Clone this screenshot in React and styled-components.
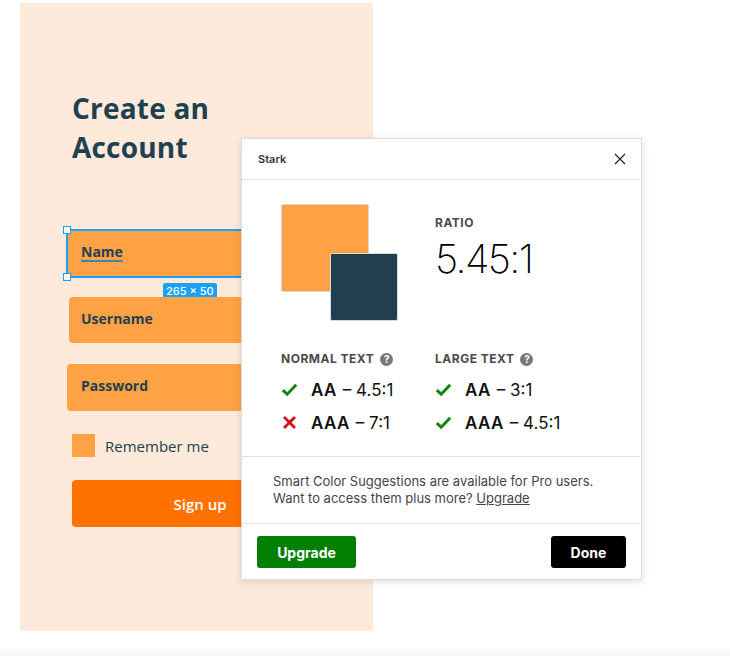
import React from 'react';
import styled, { createGlobalStyle } from 'styled-components';

const GlobalStyle = createGlobalStyle`
  html, body {
    margin: 0;
    padding: 0;
    background: #fff;
  }
  body {
    width: 730px;
    height: 656px;
    overflow: hidden;
    font-family: 'Open Sans', 'Liberation Sans', sans-serif;
  }
`;

const Canvas = styled.div`
  position: relative;
  width: 730px;
  height: 656px;
  padding: 3px 0 0 20px;
  box-sizing: border-box;
  background: linear-gradient(to bottom, #fff 0, #fff 646px, #f6f6f6 656px);
`;

const Artboard = styled.div`
  width: 353px;
  height: 628px;
  background: #feeadb;
  padding: 86px 0 0 52px;
  box-sizing: border-box;
  display: flex;
  flex-direction: column;
  align-items: flex-start;
`;

const Title = styled.h1`
  margin: 0;
  font-family: 'Open Sans', sans-serif;
  font-weight: 700;
  font-size: 28px;
  line-height: 39px;
  color: #1f404e;
  letter-spacing: 0.2px;
`;

const Field = styled.div`
  position: relative;
  box-sizing: border-box;
  width: ${p => p.$width}px;
  height: ${p => p.$height}px;
  margin-left: ${p => p.$x}px;
  margin-top: ${p => p.$gap}px;
  background: #ffa245;
  border-radius: ${p => (p.$selected ? 0 : 4)}px;
  border: ${p => (p.$selected ? '2px solid #1aa0f5' : 'none')};
  display: flex;
  align-items: center;
  padding-left: ${p => p.$pad}px;
  padding-bottom: 4px;
  font-weight: 700;
  font-size: 14px;
  color: #1f404e;
`;

const FieldText = styled.span`
  text-decoration: ${p => (p.$underline ? 'underline' : 'none')};
  text-decoration-color: #3d86b0;
  text-decoration-thickness: 2px;
  text-underline-offset: 3px;
`;

const Handle = styled.span`
  position: absolute;
  width: 6px;
  height: 6px;
  background: #fff;
  border: 1px solid #1aa0f5;
  left: -5px;
  ${p => (p.$bottom ? 'bottom: -5px;' : 'top: -5px;')}
`;

const SizeBadge = styled.span`
  position: absolute;
  left: 95px;
  top: 52px;
  height: 16px;
  padding: 0 3px;
  border-radius: 2px;
  background: #1aa0f5;
  color: #fff;
  font-family: 'Inter', 'Liberation Sans', sans-serif;
  font-size: 11px;
  font-weight: 500;
  line-height: 16px;
  white-space: nowrap;
`;

const CheckRow = styled.div`
  display: flex;
  align-items: center;
  gap: 10px;
  margin-top: 23px;
  font-size: 15px;
  color: #1f404e;
`;

const CheckBox = styled.span`
  width: 23px;
  height: 23px;
  background: #ffa245;
`;

const SignUp = styled.button`
  margin-top: 23px;
  width: 256px;
  height: 47px;
  border: none;
  border-radius: 4px;
  background: #ff7200;
  color: #fff;
  font-family: 'Open Sans', sans-serif;
  font-weight: 600;
  font-size: 15px;
  padding: 0;
`;

/* Stark plugin window floating over the artboard */
const Dialog = styled.div`
  position: absolute;
  left: 241px;
  top: 138px;
  width: 401px;
  height: 442px;
  box-sizing: border-box;
  background: #fff;
  border: 1px solid #dcdcdc;
  box-shadow: 0 2px 8px rgba(0, 0, 0, 0.12);
  display: flex;
  flex-direction: column;
  font-family: 'Inter', 'Liberation Sans', sans-serif;
  color: #111;
`;

const Header = styled.div`
  height: 40px;
  flex-shrink: 0;
  display: flex;
  align-items: center;
  justify-content: space-between;
  padding: 0 15px 0 16px;
  border-bottom: 1px solid #e2e2e2;
  font-size: 11px;
  font-weight: 600;
  color: #333;
`;

const Section = styled.div`
  border-bottom: 1px solid #e2e2e2;
  padding: ${p => p.$pad};
  flex-shrink: 0;
`;

const TopRow = styled.div`
  display: flex;
  align-items: flex-start;
`;

const Swatches = styled.div`
  position: relative;
  width: 116px;
  height: 116px;
  flex-shrink: 0;
`;

const Swatch = styled.span`
  position: absolute;
  box-sizing: border-box;
  left: ${p => p.$at}px;
  top: ${p => p.$at}px;
  width: ${p => p.$size}px;
  height: ${p => p.$size}px;
  border-radius: 2px;
  border: 1px solid #d8d8d8;
  background: ${p => p.$color};
`;

const RatioBlock = styled.div`
  margin-left: 38px;
  padding-top: 11px;
`;

const Caption = styled.div`
  display: flex;
  align-items: center;
  gap: 6px;
  font-size: 12px;
  font-weight: 700;
  letter-spacing: 0.5px;
  color: #4a4a4a;
  text-transform: uppercase;
  line-height: 16px;
`;

const Ratio = styled.div`
  margin-top: 4px;
  font-size: 40px;
  font-weight: 200;
  letter-spacing: -1.6px;
  line-height: 48px;
  color: #000;
`;

const Levels = styled.div`
  display: grid;
  grid-template-columns: 154px 1fr;
  margin-top: 31px;
`;

const LevelCol = styled.div`
  display: flex;
  flex-direction: column;
`;

const Help = styled.span`
  width: 13px;
  height: 13px;
  border-radius: 50%;
  background: #777;
  color: #fff;
  font-size: 10px;
  font-weight: 700;
  letter-spacing: 0;
  line-height: 13px;
  text-align: center;
`;

const Level = styled.div`
  display: flex;
  align-items: center;
  height: 33px;
  font-size: 17px;
  color: #111;
  margin-top: ${p => (p.$first ? 6 : 0)}px;
`;

const Mark = styled.svg`
  width: 17px;
  height: 17px;
  margin-right: 13px;
  flex-shrink: 0;
`;

const Bold = styled.b`
  font-weight: 600;
  letter-spacing: 0.4px;
  margin-right: 6px;
`;

const Note = styled.p`
  margin: 0;
  font-size: 13px;
  line-height: 17px;
  color: #444;
`;

const NoteLink = styled.a`
  color: #444;
  text-decoration: underline;
`;

const Footer = styled.div`
  display: flex;
  justify-content: space-between;
  align-items: center;
  padding: 12px 15px 0 15px;
`;

const ActionButton = styled.button`
  height: 32px;
  width: ${p => p.$width}px;
  border: none;
  border-radius: 3px;
  background: ${p => p.$bg};
  color: #fff;
  font-family: 'Inter', 'Liberation Sans', sans-serif;
  font-size: 14px;
  font-weight: 700;
  padding: 0;
`;

const Check = () => (
  <Mark viewBox="0 0 17 17">
    <path d="M1.8 9.2 L6.2 13.2 L15.2 3.8" fill="none" stroke="#138513" strokeWidth="3" />
  </Mark>
);

const Cross = () => (
  <Mark viewBox="0 0 17 17">
    <path d="M3 3 L14 14 M14 3 L3 14" fill="none" stroke="#d8091b" strokeWidth="2.8" />
  </Mark>
);

const levels = [
  { title: 'Normal Text', rows: [['AA', '4.5:1', true], ['AAA', '7:1', false]] },
  { title: 'Large Text', rows: [['AA', '3:1', true], ['AAA', '4.5:1', true]] },
];

export default function App() {
  return (
    <>
      <GlobalStyle />
      <Canvas>
        <Artboard>
          <Title>
            Create an
            <br />
            Account
          </Title>
          <Field $width={265} $height={49} $x={-6} $gap={62} $pad={13} $selected>
            <FieldText $underline>Name</FieldText>
            <Handle />
            <Handle $bottom />
            <SizeBadge>265 × 50</SizeBadge>
          </Field>
          <Field $width={262} $height={46} $x={-3} $gap={19} $pad={12}>
            <FieldText>Username</FieldText>
          </Field>
          <Field $width={264} $height={47} $x={-5} $gap={21} $pad={14}>
            <FieldText>Password</FieldText>
          </Field>
          <CheckRow>
            <CheckBox />
            Remember me
          </CheckRow>
          <SignUp>Sign up</SignUp>
        </Artboard>

        <Dialog>
          <Header>
            Stark
            <svg width="12" height="12" viewBox="0 0 12 12">
              <path d="M1 1 L11 11 M11 1 L1 11" stroke="#222" strokeWidth="1.2" />
            </svg>
          </Header>
          <Section $pad="24px 0 17px 39px">
            <TopRow>
              <Swatches>
                <Swatch $at={0} $size={88} $color="#ffa245" />
                <Swatch $at={49} $size={68} $color="#21404d" />
              </Swatches>
              <RatioBlock>
                <Caption>Ratio</Caption>
                <Ratio>5.45:1</Ratio>
              </RatioBlock>
            </TopRow>
            <Levels>
              {levels.map(col => (
                <LevelCol key={col.title}>
                  <Caption>
                    {col.title}
                    <Help>?</Help>
                  </Caption>
                  {col.rows.map(([lvl, val, ok], i) => (
                    <Level key={lvl} $first={i === 0}>
                      {ok ? <Check /> : <Cross />}
                      <Bold>{lvl}</Bold>– {val}
                    </Level>
                  ))}
                </LevelCol>
              ))}
            </Levels>
          </Section>
          <Section $pad="16px 0 16px 31px">
            <Note>
              Smart Color Suggestions are available for Pro users.
              <br />
              Want to access them plus more? <NoteLink>Upgrade</NoteLink>
            </Note>
          </Section>
          <Footer>
            <ActionButton $bg="#007f00" $width={99}>Upgrade</ActionButton>
            <ActionButton $bg="#000" $width={75}>Done</ActionButton>
          </Footer>
        </Dialog>
      </Canvas>
    </>
  );
}
